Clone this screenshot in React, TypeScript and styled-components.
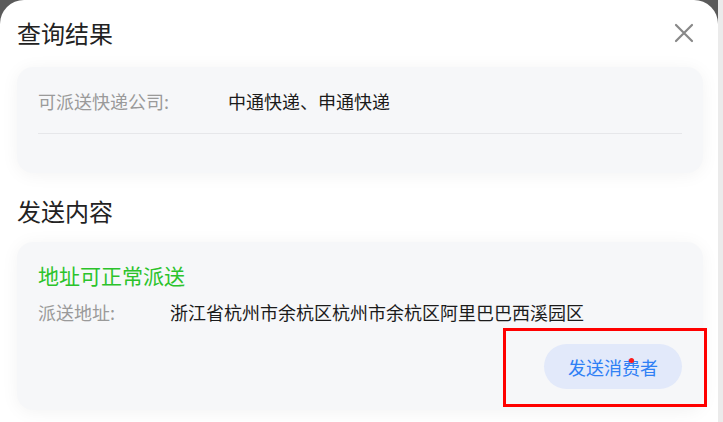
import styled, { createGlobalStyle } from "styled-components";

const GlobalStyle = createGlobalStyle`
    body {
        margin: 0;
        font-family: "Noto Sans CJK SC", "Noto Sans", sans-serif;
    }
`;

const Page = styled.div`
    display: flex;
    height: 422px;
    overflow: hidden;
`;

const Stage = styled.div`
    flex: 1;
    background: #5a5a5a;
`;

const ScrollTrack = styled.div`
    width: 5px;
    background: #ebebeb;
`;

const Modal = styled.div`
    height: 100%;
    box-sizing: border-box;
    background: #fff;
    border-radius: 24px 24px 0 0;
    padding: 16px 15px 0 17px;
`;

const Header = styled.div`
    display: flex;
    align-items: center;
    justify-content: space-between;
    height: 34px;
`;

const Heading = styled.h2<{ $top?: number }>`
    margin: ${(p) => p.$top ?? 0}px 0 0;
    font-size: 24px;
    font-weight: 400;
    line-height: 34px;
    color: #222;
`;

const CloseButton = styled.button`
    display: flex;
    align-items: center;
    justify-content: center;
    width: 24px;
    height: 24px;
    margin-right: 7px;
    padding: 0;
    border: none;
    background: none;
    cursor: pointer;
`;

const Card = styled.section<{ $top: number; $bottom: number }>`
    margin-top: ${(p) => p.$top}px;
    padding: 0 21px ${(p) => p.$bottom}px;
    background: #f6f7f9;
    border-radius: 16px;
    box-shadow: 0 2px 18px rgba(0, 0, 0, 0.05);
`;

const InfoRow = styled.div<{ $divided?: boolean }>`
    display: flex;
    align-items: center;
    line-height: 28px;
    ${(p) =>
        p.$divided &&
        `
        padding: 20px 0 18px;
        border-bottom: 1px solid #e6e7ea;
    `}
`;

const Label = styled.span<{ $width: number }>`
    flex: none;
    width: ${(p) => p.$width}px;
    font-size: 18px;
    color: #9a9a9a;
`;

const Value = styled.span`
    font-size: 18px;
    color: #1b1b1b;
`;

const Status = styled.div`
    padding-top: 19px;
    font-size: 21px;
    line-height: 28px;
    color: #2bc32b;
`;

const AddressRow = styled(InfoRow)`
    margin-top: 9px;
`;

const Actions = styled.div`
    display: flex;
    justify-content: flex-end;
    padding-top: 18px;
`;

const ButtonSlot = styled.div`
    position: relative;
`;

const SendButton = styled.button`
    display: block;
    width: 138px;
    height: 45px;
    border: none;
    border-radius: 23px;
    background: #e2e9fa;
    color: #2f80f5;
    font-family: inherit;
    font-size: 18px;
    cursor: pointer;
`;

const Highlight = styled.div`
    position: absolute;
    inset: -16px -25px -18px -41px;
    border: 3px solid #ff0000;
    pointer-events: none;
`;

const Marker = styled.span`
    position: absolute;
    left: 85px;
    top: 14px;
    width: 5px;
    height: 5px;
    border-radius: 50%;
    background: #ff1a1a;
`;

function CloseIcon() {
    return (
        <svg width="20" height="20" viewBox="0 0 20 20">
            <path d="M2 2 L18 18 M18 2 L2 18" stroke="#888" strokeWidth="2.2" strokeLinecap="round" />
        </svg>
    );
}

export default function App() {
    return (
        <Page>
            <GlobalStyle />
            <Stage>
                <Modal>
                    <Header>
                        <Heading>查询结果</Heading>
                        <CloseButton aria-label="关闭">
                            <CloseIcon />
                        </CloseButton>
                    </Header>
                    <Card $top={17} $bottom={39}>
                        <InfoRow $divided>
                            <Label $width={190}>可派送快递公司:</Label>
                            <Value>中通快递、申通快递</Value>
                        </InfoRow>
                    </Card>

                    <Heading $top={21}>发送内容</Heading>
                    <Card $top={14} $bottom={21}>
                        <Status>地址可正常派送</Status>
                        <AddressRow>
                            <Label $width={132}>派送地址:</Label>
                            <Value>浙江省杭州市余杭区杭州市余杭区阿里巴巴西溪园区</Value>
                        </AddressRow>
                        <Actions>
                            <ButtonSlot>
                                <SendButton>发送消费者</SendButton>
                                <Highlight />
                                <Marker />
                            </ButtonSlot>
                        </Actions>
                    </Card>
                </Modal>
            </Stage>
            <ScrollTrack />
        </Page>
    );
}
